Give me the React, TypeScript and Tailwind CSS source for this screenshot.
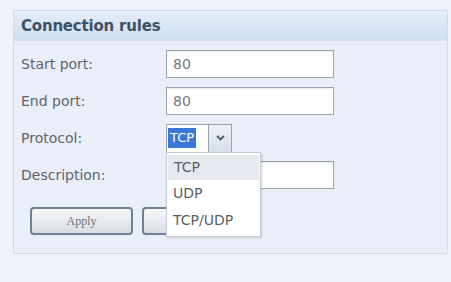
const font = { fontFamily: '"DejaVu Sans", Verdana, sans-serif' };

function Field({ label, children }: { label: string; children: React.ReactNode }) {
  return (
    <div className="flex items-center h-[28px]">
      <div className="w-[145px] text-[14px] text-[#60656c]">{label}</div>
      {children}
    </div>
  );
}

function TextBox({ value }: { value?: string }) {
  return (
    <div className="w-[168px] h-[28px] bg-white border border-[#9aa3ad] shadow-[inset_0_1px_1px_rgba(0,0,0,0.08)] flex items-center px-[6px] text-[14px] text-[#74787d]">
      {value}
    </div>
  );
}

export default function App() {
  return (
    <div style={font} className="w-[451px] h-[282px] bg-[#eff2fa] pt-[10px] pl-[13px] pr-[3px] overflow-hidden">
      <div className="relative h-[244px] border border-[#d3dae5] bg-[#e9eef8] rounded-[2px]">
        <div className="mt-[2px] h-[28px] bg-gradient-to-b from-[#e3ecf7] to-[#cfdff0] border-b border-[#d6e0ec] flex items-center pl-[7px]">
          <span className="text-[15px] font-bold text-[#3d5268] tracking-[-0.2px]">Connection rules</span>
        </div>

        <div className="pl-[7px] pt-[9px] flex flex-col gap-[9px]">
          <Field label="Start port:">
            <TextBox value="80" />
          </Field>
          <Field label="End port:">
            <TextBox value="80" />
          </Field>
          <Field label="Protocol:">
            <div className="flex h-[29px] w-[66px] border border-[#9aa3ad] bg-white">
              <div className="flex-1 flex items-center pl-[1px] border-r border-[#9aa3ad]">
                <span className="bg-[#3a78d8] text-white text-[13px] px-[2px] leading-[20px]">TCP</span>
              </div>
              <div className="w-[22px] bg-gradient-to-b from-[#eef2f7] to-[#d7dee8] flex items-center justify-center">
                <svg width="9" height="6" viewBox="0 0 9 6">
                  <path d="M1 1 L4.5 4.5 L8 1" fill="none" stroke="#4c5a6a" strokeWidth="1.8" />
                </svg>
              </div>
            </div>
          </Field>
          <Field label="Description:">
            <TextBox />
          </Field>
        </div>

        <div className="pl-[16px] pt-[18px] flex gap-[9px]">
          <button className="w-[103px] h-[28px] rounded-[4px] border-2 border-[#6f8194] bg-gradient-to-b from-[#f6f7f9] to-[#d9dde3] text-[12px] text-[#6b7078]" style={{ fontFamily: '"Liberation Serif", serif' }}>
            Apply
          </button>
          <button className="w-[103px] h-[28px] rounded-[4px] border-2 border-[#6f8194] bg-gradient-to-b from-[#f6f7f9] to-[#d9dde3]" />
        </div>

        <div className="absolute left-[152px] top-[141px] w-[95px] bg-white border border-[#c3c9d2] shadow-[1px_1px_2px_rgba(0,0,0,0.15)] py-[2px] text-[14px] text-[#5a5f66]">
          <div className="h-[25px] flex items-center pl-[6px] bg-[#e6e9ef] mx-[1px]">TCP</div>
          <div className="h-[27px] flex items-center pl-[6px]">UDP</div>
          <div className="h-[27px] flex items-center pl-[6px]">TCP/UDP</div>
        </div>
      </div>
    </div>
  );
}
